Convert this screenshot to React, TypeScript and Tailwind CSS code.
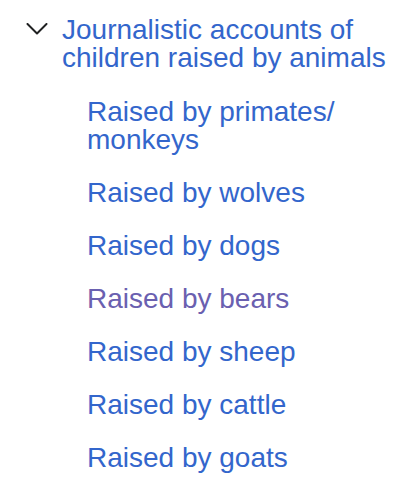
import React from "react";

const items = [
  { label: "Raised by primates/ monkeys", visited: false },
  { label: "Raised by wolves", visited: false },
  { label: "Raised by dogs", visited: false },
  { label: "Raised by bears", visited: true },
  { label: "Raised by sheep", visited: false },
  { label: "Raised by cattle", visited: false },
  { label: "Raised by goats", visited: false },
];

function Chevron() {
  return (
    <svg width="22" height="12" viewBox="0 0 22 12" fill="none" className="block">
      <path d="M1.5 1 L11 10.5 L20.5 1" stroke="#202122" strokeWidth="2" strokeLinecap="round" strokeLinejoin="round" />
    </svg>
  );
}

export default function App() {
  return (
    <div
      className="w-[408px] h-[492px] bg-white pt-[3.5px] text-[28px] leading-[28px]"
      style={{ fontFamily: '"Liberation Sans", Arial, sans-serif' }}
    >
      <ul>
        <li>
          <div className="flex">
            <div className="w-[62px] shrink-0 pl-[26px] pt-[19px]">
              <Chevron />
            </div>
            <a href="#" className="block py-[12.5px] pr-[16px] text-[#3366cc]">
              Journalistic accounts of children raised by animals
            </a>
          </div>
          <ul className="pl-[87px] pt-[1px]">
            {items.map((item) => (
              <li key={item.label}>
                <a
                  href="#"
                  className={`block py-[12.5px] pr-[60px] ${item.visited ? "text-[#6a60b0]" : "text-[#3366cc]"}`}
                >
                  {item.label}
                </a>
              </li>
            ))}
          </ul>
        </li>
      </ul>
    </div>
  );
}
